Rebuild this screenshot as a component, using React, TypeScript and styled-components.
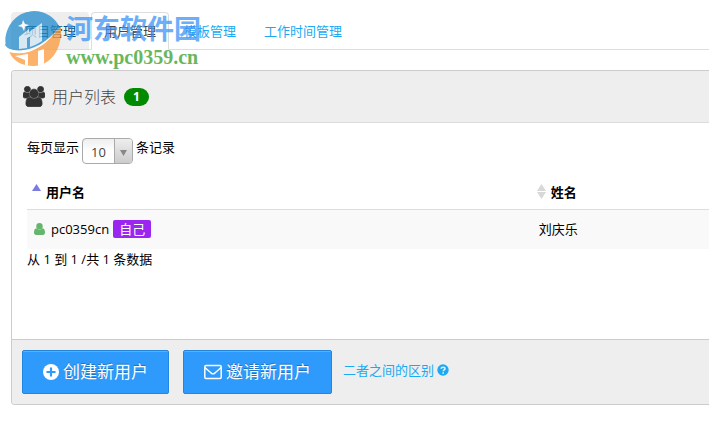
import React from "react";
import styled, { createGlobalStyle } from "styled-components";

const GlobalStyle = createGlobalStyle`
  *, *::before, *::after { box-sizing: border-box; }
  body {
    margin: 0;
    background: #fff;
    color: #000;
    font-family: "Open Sans", "Noto Sans CJK SC", sans-serif;
    font-size: 13px;
    line-height: 20px;
    overflow-x: hidden;
  }
  button, select { font-family: inherit; }
`;

const Page = styled.div`
  position: relative;
  padding: 12px 0 16px 11px;
`;

const Tabs = styled.nav`
  display: flex;
  gap: 2px;
  height: 38px;
  border-bottom: 1px solid #ddd;
`;

const Tab = styled.a<{ $state?: "hover" | "active" }>`
  height: ${(p) => (p.$state === "active" ? 38 : 37)}px;
  padding: 8px 12px;
  border: 1px solid ${(p) => (p.$state === "active" ? "#ddd" : p.$state === "hover" ? "#eee" : "transparent")};
  border-bottom-color: ${(p) => (p.$state === "active" ? "#fff" : "transparent")};
  border-radius: 4px 4px 0 0;
  background: ${(p) => (p.$state === "hover" ? "#eee" : p.$state === "active" ? "#fff" : "transparent")};
  color: ${(p) => (p.$state === "active" ? "#444" : p.$state === "hover" ? "#00527a" : "#1aa9f2")};
  text-decoration: none;
  white-space: nowrap;
`;

const Panel = styled.section`
  margin-top: 20px;
  border: 1px solid #ccc;
  border-right: 0;
  border-radius: 4px 0 0 4px;
  overflow: hidden;
`;

const PanelHeader = styled.header`
  display: flex;
  align-items: center;
  gap: 7px;
  height: 52px;
  padding: 0 11px;
  border-bottom: 1px solid #ddd;
  background: #eee;
`;

const Title = styled.h3`
  margin: 0;
  color: #444;
  font-size: 16px;
  font-weight: 300;
`;

const CountBadge = styled.span`
  min-width: 25px;
  margin-left: 1px;
  border-radius: 9px;
  background: #008a00;
  color: #fff;
  font-size: 12px;
  font-weight: 700;
  line-height: 18px;
  text-align: center;
`;

const PanelBody = styled.div`
  min-height: 216px;
  padding: 15px 0 0 15px;
`;

const LengthLabel = styled.label`
  display: flex;
  gap: 3px;
  line-height: 18px;
`;

const SelectBox = styled.span`
  position: relative;
  display: block;
  width: 51px;
  height: 26px;
`;

const Select = styled.select`
  appearance: none;
  width: 100%;
  height: 100%;
  padding: 2px 8px 0;
  border: 1px solid #aaa;
  border-radius: 4px;
  background: linear-gradient(#eee, #fff 50%);
  color: #444;
  font-size: 13px;
`;

const SelectArrow = styled.span`
  position: absolute;
  inset: 1px 1px 1px auto;
  width: 18px;
  display: grid;
  place-items: center;
  padding-top: 4px;
  border-left: 1px solid #aaa;
  border-radius: 0 3px 3px 0;
  background: linear-gradient(#eee, #ccc);
  pointer-events: none;
`;

const Table = styled.table`
  width: 100%;
  margin-top: 11px;
  border-collapse: collapse;
  table-layout: fixed;
`;

const HeadCell = styled.th<{ $wide?: boolean }>`
  width: ${(p) => (p.$wide ? "74%" : "26%")};
  height: 34px;
  padding: 0 5px;
  text-align: left;
`;

const SortLabel = styled.span`
  display: flex;
  align-items: center;
  gap: 5px;
`;

const Cell = styled.td`
  height: 40px;
  padding: 0 7px;
  border-top: 1px solid #ddd;
  background: #f9f9f9;
`;

const UserLine = styled.span`
  display: flex;
  align-items: center;
`;

const UserName = styled.span`
  margin: 0 4px 0 6px;
`;

const SelfTag = styled.span`
  padding: 0 6px;
  border-radius: 2px;
  background: #9b26f0;
  color: #fff;
  line-height: 18px;
`;

const PanelFooter = styled.footer`
  display: flex;
  align-items: flex-start;
  height: 65px;
  padding: 10px;
  border-top: 1px solid #ccc;
  background: #eee;
`;

const ActionButton = styled.button`
  display: flex;
  align-items: center;
  justify-content: center;
  gap: 4px;
  height: 44px;
  margin-right: 14px;
  padding: 0 20px;
  border: 1px solid #2386dc;
  border-radius: 2px;
  background: #2e9afb;
  box-shadow: inset 0 1px 0 #59b0fc;
  color: #fff;
  font-size: 17px;
  line-height: 24px;
  text-shadow: 0 -1px 0 rgba(0, 0, 0, 0.25);
  white-space: nowrap;
`;

const HelpLink = styled.a`
  display: flex;
  align-items: center;
  gap: 3px;
  margin: 10px 0 0 -3px;
  color: #1aa9f2;
  text-decoration: none;
`;

const Watermark = styled.div`
  position: absolute;
  top: 8px;
  left: 4px;
  display: flex;
  pointer-events: none;
  opacity: 0.75;
`;

const WatermarkText = styled.div`
  display: flex;
  flex-direction: column;
  padding-top: 6px;
`;

const WatermarkName = styled.span`
  color: #3b94f5;
  font-size: 27px;
  font-weight: 700;
  line-height: 30px;
`;

const WatermarkSite = styled.span`
  color: #36a026;
  font-family: "Liberation Serif", serif;
  font-size: 20px;
  font-weight: 700;
  line-height: 26px;
`;

const UsersIcon = () => (
  <svg width="22" height="21" viewBox="0 -256 1920 1792" fill="#333" stroke="#333" strokeWidth="70" aria-hidden="true">
    <path d="M593 640q-162 5-265 128h-134q-82 0-138-40.5t-56-118.5q0-353 124-353 6 0 43.5 21t97.5 42.5 119 21.5q67 0 133-23-5 37-5 66 0 139 81 256zm1071 637q0 120-73 189.5t-194 69.5h-874q-121 0-194-69.5t-73-189.5q0-53 3.5-103.5t14-109 26.5-108.5 43-97.5 62-81 85.5-53.5 111.5-20q10 0 43 21.5t73 48 107 48 135 21.5 135-21.5 107-48 73-48 43-21.5q61 0 111.5 20t85.5 53.5 62 81 43 97.5 26.5 108.5 14 109 3.5 103.5zm-1024-1277q0 106-75 181t-181 75-181-75-75-181 75-181 181-75 181 75 75 181zm704 384q0 159-112.5 271.5t-271.5 112.5-271.5-112.5-112.5-271.5 112.5-271.5 271.5-112.5 271.5 112.5 112.5 271.5zm576 225q0 78-56 118.5t-138 40.5h-134q-103-123-265-128 81-117 81-256 0-29-5-66 66 23 133 23 59 0 119-21.5t97.5-42.5 43.5-21q124 0 124 353zm-128-609q0 106-75 181t-181 75-181-75-75-181 75-181 181-75 181 75 75 181z" />
  </svg>
);

const UserIcon = () => (
  <svg width="11" height="12" viewBox="0 0 11 12" fill="#66b56d" aria-hidden="true">
    <circle cx="5.5" cy="3.2" r="3.2" />
    <path d="M2.4 5.200C.7 5.300 0 7.300 0 9.500 0 11 .8 12 2.200 12h6.600c1.400 0 2.200-1 2.200-2.500 0-2.200-.7-4.200-2.400-4.300C7.500 6.200 6.500 6.400 5.500 6.400S3.500 6.200 2.400 5.200z" />
  </svg>
);

const PlusIcon = () => (
  <svg width="16" height="16" viewBox="0 0 16 16" aria-hidden="true">
    <circle cx="8" cy="8" r="8" fill="#fff" />
    <path d="M8 3.500v9M3.500 8h9" stroke="#2e9afb" strokeWidth="2.200" />
  </svg>
);

const MailIcon = () => (
  <svg width="18" height="16" viewBox="0 0 18 16" fill="none" stroke="#fff" strokeWidth="1.500" aria-hidden="true">
    <rect x=".8" y="1.500" width="16.400" height="13" rx="1.200" />
    <path d="M1 3.500c2 2.200 4.500 4 6.300 5.600 1.200 1 2.200 1 3.400 0C12.500 7.500 15 5.700 17 3.500" />
  </svg>
);

const HelpIcon = () => (
  <svg width="12" height="12" viewBox="0 0 12 12" aria-hidden="true">
    <circle cx="6" cy="6" r="5.700" fill="#1aa9f2" />
    <path d="M4 4.700C4.200 2.700 8 2.700 8 4.700 8 5.900 6.200 5.900 6.200 7.200" fill="none" stroke="#eee" strokeWidth="1.500" />
    <path d="M5.400 8.200h1.600v1.500H5.400z" fill="#eee" />
  </svg>
);

const SortIcon = ({ active = false }: { active?: boolean }) => (
  <svg width="9" height="15" viewBox="0 0 9 15" aria-hidden="true">
    <path d="M0 7 4.500 0 9 7z" fill={active ? "#7b7be0" : "#d8d8d8"} />
    {!active && <path d="M0 8h9l-4.500 7z" fill="#d8d8d8" />}
  </svg>
);

const WatermarkLogo = () => (
  <svg width="62" height="60" viewBox="0 0 62 60" aria-hidden="true">
    <path d="M8 42C8 18 15 3 30 3c12 0 21 7 25 15 3 8-3 14-13 19-11 6-23 9-34 5z" fill="#238bcc" />
    <path d="M2 38C-1 26 7 7 24 4l-6 18C9 27 5 32 2 38z" fill="#238bcc" />
    <path d="M1 37c4-7 9-12 15-16-5 6-8 12-7 21-3 0-6-2-8-5z" fill="#238bcc" />
    <path d="M14 18l4-2 1-4 2 4 4 1-4 2-1 4-2-4z" fill="#fff" />
    <path d="M15 29l10-8v3l13-9v18c-4 3-9 5-12 6V29l-3 1v10l-8 1z" fill="#fff" fillOpacity=".8" />
    <path d="M5 43c15 4 35-4 47-20 2-2 4-3 5-3 1 22-10 37-27 38-13 0-22-6-25-15z" fill="#fb993a" />
    <path d="M3 40c15 7 38-1 52-21C42 40 22 49 5 44z" fill="#fff" />
    <path d="M11 48l13-2v12l-3-1v-5zM34 43l6-2v15l-6 2z" fill="#fff" />
  </svg>
);

export default function App() {
  return (
    <>
      <GlobalStyle />
      <Page>
        <Tabs>
          <Tab href="#projects" $state="hover">项目管理</Tab>
          <Tab href="#users" $state="active" aria-current="page">用户管理</Tab>
          <Tab href="#templates">模板管理</Tab>
          <Tab href="#worktime">工作时间管理</Tab>
        </Tabs>
        <Panel>
          <PanelHeader>
            <UsersIcon />
            <Title>用户列表</Title>
            <CountBadge>1</CountBadge>
          </PanelHeader>
          <PanelBody>
            <LengthLabel htmlFor="page-size">
              每页显示
              <SelectBox>
                <Select id="page-size" defaultValue="10">
                  <option>10</option>
                  <option>25</option>
                  <option>50</option>
                </Select>
                <SelectArrow>
                  <svg width="7" height="6" viewBox="0 0 7 6" aria-hidden="true">
                    <path d="M0 0h7L3.500 6z" fill="#888" />
                  </svg>
                </SelectArrow>
              </SelectBox>
              条记录
            </LengthLabel>
            <Table>
              <thead>
                <tr>
                  <HeadCell $wide aria-sort="ascending">
                    <SortLabel><SortIcon active />用户名</SortLabel>
                  </HeadCell>
                  <HeadCell>
                    <SortLabel><SortIcon />姓名</SortLabel>
                  </HeadCell>
                </tr>
              </thead>
              <tbody>
                <tr>
                  <Cell>
                    <UserLine>
                      <UserIcon />
                      <UserName>pc0359cn</UserName>
                      <SelfTag>自己</SelfTag>
                    </UserLine>
                  </Cell>
                  <Cell>刘庆乐</Cell>
                </tr>
              </tbody>
            </Table>
            <div>从 1 到 1 /共 1 条数据</div>
          </PanelBody>
          <PanelFooter>
            <ActionButton type="button"><PlusIcon />创建新用户</ActionButton>
            <ActionButton type="button"><MailIcon />邀请新用户</ActionButton>
            <HelpLink href="#difference">二者之间的区别<HelpIcon /></HelpLink>
          </PanelFooter>
        </Panel>
        <Watermark>
          <WatermarkLogo />
          <WatermarkText>
            <WatermarkName>河东软件园</WatermarkName>
            <WatermarkSite>www.pc0359.cn</WatermarkSite>
          </WatermarkText>
        </Watermark>
      </Page>
    </>
  );
}
